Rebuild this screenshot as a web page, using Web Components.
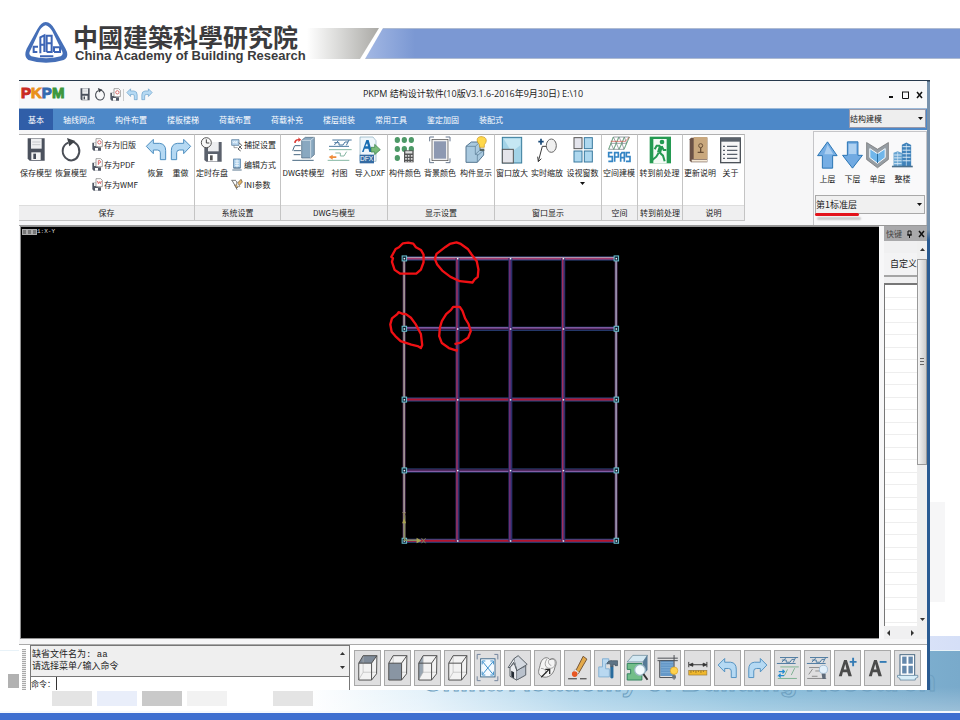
<!DOCTYPE html>
<html lang="zh-CN">
<head>
<meta charset="utf-8">
<title>PKPM 结构设计软件</title>
<style>
html,body{margin:0;padding:0}
body{background:#fff;color:#222;font-family:"Liberation Sans","Noto Sans CJK SC",sans-serif;font-size:8px}
</style>
</head>
<body>
<slide-page>
  <slide-banner></slide-banner>
  <app-window>
    <title-bar></title-bar>
    <tab-strip></tab-strip>
    <ribbon-bar>
      <ribbon-group name="保存" style="--w:176px;--cols:34px 36px 54px 25px 25px">
        <ribbon-tool icon="save">保存模型</ribbon-tool>
        <ribbon-tool icon="refresh">恢复模型</ribbon-tool>
        <tool-stack>
          <ribbon-tool small icon="copyO">存为旧版</ribbon-tool>
          <ribbon-tool small icon="copyP">存为PDF</ribbon-tool>
          <ribbon-tool small icon="copyW">存为WMF</ribbon-tool>
        </tool-stack>
        <ribbon-tool icon="undo">恢复</ribbon-tool>
        <ribbon-tool icon="redo">重做</ribbon-tool>
      </ribbon-group>
      <ribbon-group name="系统设置" style="--w:86px;--cols:34px 50px">
        <ribbon-tool icon="timer">定时存盘</ribbon-tool>
        <tool-stack>
          <ribbon-tool small icon="snap">捕捉设置</ribbon-tool>
          <ribbon-tool small icon="edit">编辑方式</ribbon-tool>
          <ribbon-tool small icon="ini">INI参数</ribbon-tool>
        </tool-stack>
      </ribbon-group>
      <ribbon-group name="DWG与模型" style="--w:107px;--cols:45px 27px 34px">
        <ribbon-tool icon="dwg">DWG转模型</ribbon-tool>
        <ribbon-tool icon="sketch">衬图</ribbon-tool>
        <ribbon-tool icon="dxf">导入DXF</ribbon-tool>
      </ribbon-group>
      <ribbon-group name="显示设置" style="--w:107px;--cols:34px 36px 36px">
        <ribbon-tool icon="dots">构件颜色</ribbon-tool>
        <ribbon-tool icon="backdrop">背景颜色</ribbon-tool>
        <ribbon-tool icon="showpart">构件显示</ribbon-tool>
      </ribbon-group>
      <ribbon-group name="窗口显示" style="--w:107px;--cols:34px 36px 35px">
        <ribbon-tool icon="winzoom">窗口放大</ribbon-tool>
        <ribbon-tool icon="livezoom">实时缩放</ribbon-tool>
        <ribbon-tool icon="panes" drop>设视窗数</ribbon-tool>
      </ribbon-group>
      <ribbon-group name="空间" style="--w:36px;--cols:34px">
        <ribbon-tool icon="spas">空间建模</ribbon-tool>
      </ribbon-group>
      <ribbon-group name="转到前处理" style="--w:45px;--cols:43px">
        <ribbon-tool icon="exit">转到前处理</ribbon-tool>
      </ribbon-group>
      <ribbon-group name="说明" style="--w:62px;--cols:34px 27px">
        <ribbon-tool icon="book">更新说明</ribbon-tool>
        <ribbon-tool icon="about">关于</ribbon-tool>
      </ribbon-group>
      <floor-panel slot="side"></floor-panel>
    </ribbon-bar>
    <work-area>
      <cad-view></cad-view>
      <dock-panel></dock-panel>
    </work-area>
    <status-area>
      <command-box></command-box>
      <view-toolbar></view-toolbar>
    </status-area>
  </app-window>
</slide-page>

<script>
const undoPath='<path d="M10 31L31 10V22H50Q68 24 68 44V71H52V50Q52 42 43 42H31V53Z" fill="#b5d9f3" stroke="#4e8fc0" stroke-width="3" stroke-linejoin="round"/>';
const copyBase=(c)=>`<path d="M4 14H20V28H30V38H8L4 34Z" fill="#525865"/><rect x="9" y="15" width="11" height="9" fill="#eee"/><rect x="12" y="30" width="9" height="8" fill="#fff"/><path d="M15 2H29L34 7V26H15Z" fill="#fff" stroke="#777" stroke-width="2"/>${c}`;
const sketchLines='<g fill="none" stroke="#57708c" stroke-width="3"><path d="M16 12H74M6 31H66M34 14L22 27M66 12L58 28M22 20H36V27H48L54 18H63" stroke="#48769e"/></g>';
const cubeFill='<path d="M12 38L26 14H70L69 72L53 92H12Z" fill="#f3f3f3"/>';
const cubeEdges='<path d="M12 38L26 14H70L69 72L53 92H12ZM12 38H53V92M53 38L70 14" fill="none" stroke="#4a4a4a" stroke-width="3" stroke-linejoin="round"/>';
const cubeBack='<path d="M26 15V67H69M26 67L12 91" fill="none" stroke="#b3b3b3" stroke-width="2"/>';
const corner='<path d="M7 26V10H18M62 10H73V26M7 80V94H18M62 94H73V80" fill="none" stroke="#6d7f99" stroke-width="3"/>';
const aPath='<path d="M12 80L29 28H38L54 80H43L39 67H25L22 80ZM28 58H37L33 41Z" fill="#4b4b4b" fill-rule="evenodd"/>';
const B=[78,84], S=[36,42], T=[80,107];
const ICONS={
save:[B,'<path d="M14 7H65V74H20L14 68Z" fill="#4b515d"/><rect x="24" y="8" width="32" height="30" fill="#eeeff1"/><path d="M28 18H52M28 26H52" stroke="#c7c9cd" stroke-width="3"/><rect x="25" y="49" width="28" height="23" fill="#f4f4f4"/><rect x="31" y="53" width="8" height="16" fill="#454b57"/>'],
refresh:[B,'<path d="M31 20C12 28 9 50 22 65C34 78 53 75 60 60C69 43 62 24 44 17" fill="none" stroke="#4a4e56" stroke-width="6"/><path d="M27 6L52 15L34 31Z" fill="#3e4248"/>'],
copyO:[S,copyBase('<circle cx="25" cy="13" r="5" fill="none" stroke="#c33" stroke-width="2"/>')],
copyP:[S,copyBase('<path d="M22 21V8H27Q31 12 27 15H22" fill="none" stroke="#c33" stroke-width="2"/>')],
copyW:[S,copyBase('<path d="M19 9L22 17L25 11L28 17L31 9" fill="none" stroke="#c33" stroke-width="2"/>')],
undo:[B,undoPath],
redo:[B,`<g transform="translate(78 0) scale(-1 1)">${undoPath}</g>`],
timer:[B,'<path d="M16 18H68V77H22L16 72Z" fill="#5b616c"/><rect x="27" y="18" width="32" height="28" fill="#edeef0"/><rect x="27" y="54" width="28" height="22" fill="#fff"/><rect x="33" y="58" width="8" height="15" fill="#555"/><circle cx="22" cy="20" r="15" fill="#f8f8f8" stroke="#555" stroke-width="3"/><path d="M22 10V21H31" fill="none" stroke="#444" stroke-width="3"/>'],
snap:[S,'<path d="M2 5H24V22H2Z" fill="#b9d6ee" stroke="#496f92" stroke-width="2"/><path d="M5 10L8 15L11 10L14 15M17 9V16" stroke="#fff" stroke-width="2" fill="none"/><path d="M9 22V29H20" stroke="#777" stroke-width="2" fill="none"/><path d="M24 14L32 22L21 33L29 39M24 25L33 33" stroke="#555" stroke-width="3" fill="none"/>'],
edit:[S,'<rect x="8" y="3" width="20" height="27" fill="#a8cde9" stroke="#416e97" stroke-width="2"/><path d="M12 9H24M12 16H24M12 23H24M18 4V30" stroke="#fff" stroke-width="2"/><path d="M4 36H32M8 30H28" stroke="#55738c" stroke-width="3"/>'],
ini:[S,'<path d="M1 7H15M3 7L14 26L18 35" fill="none" stroke="#777" stroke-width="3"/><path d="M30 4L11 24L18 30L34 12Z" fill="#e7b665" stroke="#5b4b39" stroke-width="2"/><path d="M16 9L27 26H18Z" fill="#fff" stroke="#777" stroke-width="2"/>'],
dwg:[B,'<path d="M32 13L43 4H70V56L59 66H32Z" fill="#89a8c0" stroke="#476278" stroke-width="2"/><path d="M32 13H59V66M59 13L70 4" fill="none" stroke="#e5eef4" stroke-width="2"/><path d="M12 29H29M8 44H30M8 56H29M4 73H68M11 29L5 44" stroke="#496983" stroke-width="3"/><path d="M9 20Q10 10 23 9L21 4L31 11L22 18V13Q15 14 14 21Z" fill="#db3b35"/>'],
sketch:[B,sketchLines+'<path d="M6 41H74M2 73H67M25 51H40V60H51L59 47" fill="none" stroke="#86b7a4" stroke-width="3"/><path d="M5 63L17 56V61H28V66H17V71Z" fill="#ef8b39"/>'],
dxf:[B,'<path d="M9 3H48L57 14V76H9Z" fill="#eef6fb" stroke="#86aabc" stroke-width="2"/><path d="M15 48L28 12H35L45 48H37L34 38H23L20 48ZM25 31H33L30 22Z" fill="#176db2" fill-rule="evenodd"/><path d="M42 34H53V25L70 41L53 56V48H42Z" fill="#78ba79" stroke="#327a43" stroke-width="2"/><rect x="8" y="56" width="43" height="26" fill="#346ba3"/><text x="29" y="76" text-anchor="middle" font-family="Liberation Sans" font-size="20" fill="#fff">DFX</text>'],
dots:[B,'<g fill="#4d9967"><ellipse cx="16" cy="12" rx="8" ry="9"/><ellipse cx="37" cy="12" rx="8" ry="9"/><ellipse cx="58" cy="12" rx="8" ry="9"/><ellipse cx="16" cy="39" rx="8" ry="9"/><ellipse cx="37" cy="39" rx="8" ry="9"/><ellipse cx="58" cy="39" rx="8" ry="9"/><ellipse cx="16" cy="66" rx="8" ry="9"/></g><rect x="36" y="43" width="29" height="36" fill="#555"/><path d="M40 49H61" stroke="#ddd" stroke-width="7"/><path d="M42 57V77M50 57V77M59 57V77" stroke="#ddd" stroke-width="5" stroke-dasharray="5 4"/>'],
backdrop:[B,'<path d="M8 16V3H21M56 3H69V16M8 67V80H21M56 80H69V67" fill="none" stroke="#69798f" stroke-width="3"/><rect x="15" y="10" width="48" height="64" fill="#eee" stroke="#464646" stroke-width="2"/><rect x="21" y="16" width="36" height="52" fill="#8d99b2"/>'],
showpart:[B,'<path d="M9 31L25 18H51V42H62V57L43 79H9Z" fill="#a9c9df" stroke="#567791" stroke-width="3"/><path d="M9 31H37L51 18M37 31V55L51 42M37 55H43V79M43 59L62 43" fill="none" stroke="#567791" stroke-width="2"/><path d="M49 26C35 9 46 0 58 2C72 4 73 17 64 26V34H50Z" fill="#ffd84b" stroke="#c69422" stroke-width="2"/><path d="M51 38H64V45H51Z" fill="#566"/>'],
winzoom:[B,'<rect x="10" y="4" width="58" height="77" fill="#a3d3e7" stroke="#377b9a" stroke-width="3"/><path d="M14 8H64V28L38 48" fill="#c5e7f3"/><rect x="10" y="40" width="33" height="41" fill="#e4e5eb" stroke="#555" stroke-width="3"/>'],
livezoom:[B,'<path d="M13 17H29M21 8V26" stroke="#174877" stroke-width="5"/><ellipse cx="52" cy="29" rx="15" ry="20" fill="#f0f0f0" stroke="#666" stroke-width="3"/><path d="M36 31H25L13 76M11 62L13 77L22 68" fill="none" stroke="#3b3b3b" stroke-width="3"/>'],
panes:[B,'<g fill="#aed8ef" stroke="#39799e" stroke-width="3"><rect x="12" y="5" width="24" height="33" fill="#e3e4ec" stroke="#555"/><rect x="43" y="5" width="24" height="33"/><rect x="12" y="45" width="24" height="33"/><rect x="43" y="45" width="24" height="33"/></g>'],
spas:[B,'<g fill="none" stroke="#69747b" stroke-width="2"><path d="M22 3H70L54 40H8ZM15 22H62M22 3L31 22L39 3L48 22L55 3L62 22M15 22L23 40L31 22L39 40L48 22L54 40"/><path d="M22 3L8 40M38 3L23 40M55 3L39 40M70 3L54 40" stroke="#5aaf74"/><path d="M14 16H58M58 16L70 3" stroke="#d84d43"/></g><path d="M19 50H8V62H19V76H7M26 77V50H37V63H26M44 77V55L48 50H55V77M44 65H55M72 50H61V62H72V76H60" fill="none" stroke="#3485c4" stroke-width="5"/>'],
exit:[B,'<rect x="8" y="2" width="64" height="80" fill="#249a52"/><path d="M19 9H59V82H19Z" fill="#f4fbf6"/><circle cx="45" cy="18" r="7" fill="#249a52"/><path d="M42 30L36 50" stroke="#249a52" stroke-width="12"/><path d="M40 29H29L23 40M44 31L50 42H58M37 49L48 59L53 76M35 50L28 62L16 72" fill="none" stroke="#249a52" stroke-width="6"/>'],
book:[B,'<path d="M12 5H61V79H12L8 73V10Z" fill="#6a5146"/><path d="M20 3H61V69H20Z" fill="#c9a87e"/><path d="M14 71H60V77H14Z" fill="#f6ead8"/><circle cx="41" cy="29" r="6" fill="none" stroke="#684e36" stroke-width="3"/><path d="M41 35V47M32 49H50" stroke="#684e36" stroke-width="4"/>'],
about:[B,'<rect x="8" y="6" width="59" height="74" fill="#f7f7f7" stroke="#4c5259" stroke-width="4"/><rect x="8" y="5" width="59" height="12" fill="#59616a"/><path d="M15 31H21M15 43H21M15 55H21M15 67H21M27 31H58M27 43H58M27 55H58M27 67H58" stroke="#58606a" stroke-width="4"/>'],
up:[B,'<path d="M39 1L69 44H55V83H23V44H8Z" fill="#76aee4" stroke="#2672b2" stroke-width="3"/><path d="M39 10L57 40H29Z" fill="#c0dcf6" opacity=".7"/>'],
down:[B,'<path d="M23 1H56V43H70L39 83L8 43H23Z" fill="#71aae2" stroke="#2672b2" stroke-width="3"/><path d="M27 7H51V39H27Z" fill="#c9e1f8" opacity=".7"/>'],
single:[B,'<path d="M5 3L39 24L73 3V56L39 82L5 56Z" fill="#969da3" stroke="#666" stroke-width="2"/><path d="M15 22L39 38L63 22V50L39 68L15 50Z" fill="#70b6ea" stroke="#fff" stroke-width="3"/><path d="M39 38V67" stroke="#256a9c" stroke-width="3"/>'],
building:[B,'<path d="M37 10L51 3L66 11V76H37Z" fill="#3f82ba"/><path d="M11 35L24 30L38 36V76H11Z" fill="#69a5d2"/><path d="M39 16H64M39 27H64M39 38H64M39 49H64M39 60H64M13 42H36M13 51H36M13 60H36M13 69H36" stroke="#dcecf8" stroke-width="3"/><path d="M51 8V76M24 33V76" stroke="#dcecf8" stroke-width="2"/><path d="M6 78H71" stroke="#4b6f8b" stroke-width="5"/>'],
cubeTop:[T,cubeFill+'<path d="M12 38L26 14H70L53 38Z" fill="#7f8b99"/>'+cubeBack+cubeEdges],
cubeFront:[T,cubeFill+cubeBack+'<path d="M12 38H53V92H12Z" fill="#8995a3"/>'+cubeEdges],
cubeLeft:[T,cubeFill+'<path d="M12 38L26 14V67L12 92Z" fill="#98a5b1"/>'+cubeBack+cubeEdges],
cubeWire:[T,cubeFill+cubeBack+cubeEdges],
extents:[T,corner+'<rect x="18" y="24" width="46" height="58" fill="#f4faff" stroke="#3c6788" stroke-width="3"/><path d="M25 34L57 73M57 34L25 73M23 42V31H33M49 31H59V42M23 65V76H33M49 76H59V65" fill="none" stroke="#358cca" stroke-width="3"/>'],
house:[T,'<path d="M16 50V80L37 92L66 76V48L44 26Z" fill="#eceef2" stroke="#4e555d" stroke-width="3" stroke-linejoin="round"/><path d="M37 60V92L66 76V48Z" fill="#b9c1cc" stroke="#4e555d" stroke-width="2"/><path d="M28 24L42 14L71 42L38 62Z" fill="#d4d9e0" stroke="#4e555d" stroke-width="3" stroke-linejoin="round"/><path d="M28 24L10 52L16 52L28 35L38 62" fill="#eceef2" stroke="#4e555d" stroke-width="3" stroke-linejoin="round"/><path d="M20 62L29 67V86L20 81Z" fill="#252c35"/>'],
orbit:[T,'<path d="M17 41C22 20 39 15 48 27C65 16 73 35 64 50C59 82 31 91 15 76C7 66 15 55 17 41Z" fill="#f4f4f4" stroke="#777" stroke-width="3"/><path d="M38 25C25 44 37 60 57 53C72 39 62 20 49 25C39 29 43 44 52 45M19 55C28 54 36 60 35 72" fill="none" stroke="#777" stroke-width="2"/><path d="M20 83L45 58M33 58H47V73" fill="none" stroke="#222" stroke-width="4"/>'],
brush:[T,'<path d="M34 63L58 16L70 25L43 71Z" fill="#e3a94a" stroke="#705134" stroke-width="3"/><path d="M33 57L45 68L36 77L25 68Z" fill="#eee" stroke="#655"/><circle cx="31" cy="73" r="9" fill="#e75723"/><path d="M10 88H38M48 88H69" stroke="#222" stroke-width="3"/>'],
hammer:[T,'<path d="M12 50H24V24H44V40H34V56H46V82H12Z" fill="#b9d8f0" stroke="#82afd2" stroke-width="3"/><path d="M38 40Q42 28 56 30H72V46H64V42H58V50H50V42Q44 38 38 40Z" fill="#5d7386" stroke="#3c4c5a" stroke-width="2"/><path d="M49 50H59V84Q54 90 49 84Z" fill="#286b9d"/>'],
inspect:[T,'<path d="M7 34L25 13H72L57 34Z" fill="#d4e8f2" stroke="#537789" stroke-width="2"/><path d="M7 39H54V92H7V72H18V58H7Z" fill="#72be89" stroke="#2e805c" stroke-width="3"/><path d="M57 34L72 12V60L57 77Z" fill="#567b98"/><circle cx="48" cy="60" r="17" fill="#f2fbff" stroke="#9ab7c4" stroke-width="4"/><path d="M59 73L72 91" stroke="#333" stroke-width="6"/>'],
region:[T,'<rect x="17" y="28" width="43" height="51" fill="#6498c8"/><path d="M20 36H58M20 44H58M20 52H58M20 60H58M20 68H58" stroke="#8ab6dc" stroke-width="2"/><path d="M8 22H73M15 30V84H65M61 12V91M8 30H73" fill="none" stroke="#44494e" stroke-width="3"/><circle cx="61" cy="62" r="12" fill="#ffd24b" stroke="#d69c21" stroke-width="2"/><path d="M55 77H67V87H55Z" fill="#69747d"/>'],
ruler:[T,'<path d="M12 34V51M70 34V51M14 43H69M14 43L25 38V48ZM69 43L58 38V48Z" fill="#333" stroke="#333" stroke-width="3"/><rect x="12" y="61" width="58" height="15" fill="#efb72c" stroke="#967638" stroke-width="2"/><path d="M19 62V69M27 62V66M35 62V69M43 62V66M51 62V69M59 62V66" stroke="#684e22" stroke-width="2"/>'],
tUndo:[T,`<g transform="translate(0 13)">${undoPath}</g>`],
tRedo:[T,`<g transform="translate(80 13) scale(-1 1)">${undoPath}</g>`],
layers1:[T,'<g transform="translate(0 8)">'+sketchLines+'</g><path d="M17 50H76M9 87H70M40 58L30 78M63 54L52 76" fill="none" stroke="#7cb18f" stroke-width="3"/><path d="M12 65H29M24 59L30 65L24 71M29 78H12L18 72M12 78L18 84" fill="none" stroke="#258bd0" stroke-width="4"/>'],
layers2:[T,'<g transform="translate(0 8)">'+sketchLines+'</g><path d="M13 52H70M7 87H68M24 57L12 74M33 63H48M22 80H40" fill="none" stroke="#888" stroke-width="3"/><circle cx="59" cy="58" r="13" fill="#e2f0fb" stroke="#83a9c9" stroke-width="2"/><path d="M53 72H66V89H56Z" fill="#5d6978"/>'],
fontUp:[T,aPath+'<path d="M47 34H69M58 21V48" stroke="#347bb4" stroke-width="6"/>'],
fontDown:[T,aPath+'<path d="M47 34H69" stroke="#347bb4" stroke-width="6"/>'],
window:[T,'<rect x="16" y="11" width="47" height="68" fill="#fff" stroke="#3a5d7a" stroke-width="3"/><rect x="23" y="17" width="34" height="54" fill="#6488ac"/><path d="M40 16V74M22 43H58" stroke="#fff" stroke-width="6"/><path d="M8 77H73V83L65 87V92H16V87L8 83Z" fill="#d9eef8" stroke="#466f8c" stroke-width="2"/>']
};
function icon(n,w,h){const [vb,p]=ICONS[n];return `<svg aria-hidden="true" width="${w}" height="${h}" viewBox="0 0 ${vb[0]} ${vb[1]}">${p}</svg>`}
const BASE='<style>:host,*{box-sizing:border-box}button,input,select,textarea{font:inherit;color:inherit;margin:0;border:0;padding:0;border-radius:0;background:none;outline:0}svg{display:block;flex:none}</style>';
function define(tag,html){customElements.define(tag,class extends HTMLElement{connectedCallback(){if(!this.shadowRoot)this.attachShadow({mode:'open'}).innerHTML=BASE+(typeof html==='function'?html(this):html)}})}

define('slide-page',`<style>
:host{display:grid;min-height:100vh}
.back,.front{grid-area:1/1;min-width:0;display:flex;flex-direction:column}
.back{justify-content:flex-end}
.scene{height:206px;display:flex;justify-content:flex-end;padding-right:15px}
.scene i{display:block;width:15px;height:100px;background:#f6f6f7;margin-top:72px}
.lav{height:14px;background:linear-gradient(90deg,#fff 60%,#d5dff7)}
.sky{height:61px;border-top:1px solid #e8f2f8;background:linear-gradient(#fff0 60%,#ffffff40),linear-gradient(90deg,#fff 32%,#e3f1fa 44%,#acd3ea 60%,#8bbfdc 78%,#79aacb 100%);display:flex;align-items:flex-end;justify-content:flex-end;padding:0 24px 12px 0;font:bold 29px/36px "Liberation Sans",sans-serif;color:transparent;-webkit-text-stroke:1px #6d9fc0;overflow:hidden;white-space:nowrap}
.bar{height:9px;border-top:2px solid #f6f9fd;background:#3f6fd0}
.front{z-index:1}
.chips{height:30px;display:flex;align-items:flex-start;padding:1px 0 0 52px;gap:5px}
.chips i{width:40px;height:15px}
.main{flex:1;display:flex;align-items:stretch}
.side{width:19px;display:flex;align-items:flex-end;justify-content:flex-end;padding-bottom:2px}
.side i{width:11px;height:14px;background:#b1b1b1}
::slotted(app-window){flex:1;min-width:0}
.gap{width:30px}
</style>
<div class="back"><div class="scene"><i></i></div><div class="lav"></div><div class="sky" aria-hidden="true">China Academy of Building Research</div><div class="bar"></div></div>
<div class="front"><slot name="banner"></slot><div class="main"><div class="side"><i></i></div><slot></slot><div class="gap"></div></div>
<div class="chips"><i style="background:#e4e4e4"></i><i style="background:#e9eefa"></i><i style="background:#c9c9c9"></i><i style="background:#f2f2f2"></i><i style="width:36px"></i><i style="background:#e4e4e4"></i></div></div>`);
document.querySelector('slide-banner').slot='banner';

define('slide-banner',`<style>
:host{display:flex;height:80px;align-items:flex-start;padding-left:25px}
.logo{margin-top:21px}
.names{margin:24px 0 0 5px;width:230px;white-space:nowrap;color:#3b3b3d}
.zh{font:bold 25px/25px "Noto Sans CJK TC",sans-serif}
.en{font:bold 13px/14px "Liberation Sans",sans-serif;padding-left:2px}
.grey{width:72px;height:31px;margin:28px -14px 0 4px;background:linear-gradient(90deg,#fff,#d5d5d3 50%,#aaa9a5);clip-path:polygon(0 0,100% 0,53px 100%,0 100%)}
.blue{flex:1;height:31px;margin-top:28px;background:linear-gradient(90deg,#a3b8e4,#7b98d3 50px);border-top:1px solid #aebbd2;border-bottom:1px solid #aebbd2;clip-path:polygon(18px 0,100% 0,100% 100%,0 100%)}
</style>
<svg class="logo" width="43" height="43" viewBox="0 0 129 129" role="img" aria-label="CABR"><path d="M62 3Q78 4 89 25L121 82Q135 107 116 117Q63 134 10 117Q-5 107 5 83L37 25Q48 4 62 3ZM62 13Q51 16 43 30L17 86Q8 100 19 106Q64 118 107 106Q118 100 109 86L82 31Q73 16 62 13Z" fill="#456fb8" fill-rule="evenodd"/><g fill="none" stroke="#3d65b5" stroke-width="6"><path d="M39 77H26V93H37M46 97V49L58 43V93M46 71H58M65 93V44H80V67H65M80 67V93H65M87 93V79H105V93H87M45 106H85"/></g></svg>
<div class="names"><div class="zh">中國建築科學研究院</div><div class="en">China Academy of Building Research</div></div>
<div class="grey"></div><div class="blue"></div>`);

define('app-window',`<style>:host{display:flex;flex-direction:column;background:#f7f7f8;border-top:1px solid #24384e;border-right:3px solid #2d5d93;border-image:linear-gradient(#27394d 0 1px,#7892ac 2px 150px,#2a5b92 160px) 1 3 0 0}</style><slot></slot>`);

define('title-bar',`<style>
:host{display:grid;grid-template-columns:1fr auto 1fr;height:27px;align-items:center;background:#f8f8f9}
.l,.r{display:flex;align-items:center}
.logo{font:bold 15px/18px "Liberation Sans",sans-serif;width:43px;margin:0 13px 4px 2px;-webkit-text-stroke:1px}
.l button{width:15px;height:16px;display:flex;align-items:center;justify-content:center}
.sep{width:1px;height:12px;background:#ccc;margin:0 0 0 1px}
h1{margin:0 0 2px;font:9px/14px "Open Sans","Noto Sans CJK SC",sans-serif;color:#222;white-space:nowrap}
.r{justify-content:flex-end;padding-right:1px}
.r button{width:14px;height:14px;display:flex;align-items:center;justify-content:center}
</style>
<div class="l"><div class="logo"><span style="color:#c92a22">P</span><span style="color:#e9901b">K</span><span style="color:#3469ae">P</span><span style="color:#3d973d">M</span></div>
<button aria-label="保存">${icon('save',14,15)}</button><button aria-label="刷新">${icon('refresh',14,15)}</button><button aria-label="另存">${icon('copyO',12,14)}</button><i class="sep"></i><button aria-label="撤销">${icon('undo',14,15)}</button><button aria-label="重做">${icon('redo',14,15)}</button></div>
<h1>PKPM 结构设计软件(10版V3.1.6-2016年9月30日) E:\\10</h1>
<div class="r"><button aria-label="最小化"><svg width="6" height="8"><path d="M1 6H5" stroke="#111" stroke-width="2"/></svg></button><button aria-label="最大化"><svg width="7" height="8"><path d="M.5 1V7.5H6.5V1M0 1H7" fill="none" stroke="#111"/></svg></button><button aria-label="关闭"><svg width="7" height="8"><path d="M1 1L6 7M6 1L1 7" stroke="#111" stroke-width="1.5"/></svg></button></div>`);

define('tab-strip',`<style>
:host{display:flex;height:22px;background:#4d88c8;border-top:1px solid #9cb9d8;color:#fff;font-family:"Noto Sans CJK SC",sans-serif}
nav{display:flex;flex:1}
button{padding:0 10px 0;line-height:20px;white-space:nowrap}
button.on{background:#305ea8;padding:0 9px}
label{display:flex;position:relative;width:77px;margin-right:1px;background:#eee;color:#222;border:1px solid #99a;height:19px}
select{appearance:none;width:100%;font-size:8px;line-height:17px}
svg{position:absolute;right:2px;top:7px;pointer-events:none}
</style>
<nav>${['基本','轴线网点','构件布置','楼板楼梯','荷载布置','荷载补充','楼层组装','常用工具','鉴定加固','装配式'].map((t,i)=>`<button class="${i?'':'on'}">${t}</button>`).join('')}</nav>
<label><select aria-label="模块"><option>结构建模</option></select><svg width="5" height="4"><path d="M0 0H5L2.5 3Z" fill="#111"/></svg></label>`);

define('ribbon-bar',`<style>:host{display:flex;height:96px;padding-top:1px;border-bottom:1px solid #999;background:#f6f6f7}
.groups{display:flex;flex:1;min-width:0;height:87px;margin-top:3px;align-items:stretch}</style><div class="groups"><slot></slot></div><slot name="side"></slot>`);

define('ribbon-group',e=>`<style>:host{display:grid;grid-template-rows:1fr 15px;width:var(--w);flex:none;background:#fff;border:1px solid #c4c4c4;border-top-color:#b0b0b0;border-left:0;font-family:"Noto Sans CJK SC",sans-serif}
.in{display:grid;grid-template-columns:var(--cols);align-items:start;min-width:0}
.name{background:#efeff0;border-top:1px solid #ddd;text-align:center;line-height:13px;white-space:nowrap}</style><div class="in"><slot></slot></div><div class="name">${e.getAttribute('name')}</div>`);

define('tool-stack',`<style>:host{display:flex;flex-direction:column;padding-left:2px}</style><slot></slot>`);

define('ribbon-tool',e=>{const s=e.hasAttribute('small');return `<style>:host{display:block;min-width:0}
button{display:flex;align-items:center;width:100%;white-space:nowrap;line-height:14px;${s?'height:20px;gap:1px':'flex-direction:column;padding-top:1px;gap:2px'}}</style>
<button>${s?icon(e.getAttribute('icon'),12,14):icon(e.getAttribute('icon'),26,28)}<span><slot></slot></span>${e.hasAttribute('drop')?'<svg width="5" height="4"><path d="M0 0H5L2.5 3Z" fill="#111"/></svg>':''}</button>`});

define('floor-panel',`<style>
:host{display:flex;flex-direction:column;width:114px;border:1px solid #c5c5c8;border-bottom:0;padding:8px 1px 0;background:#f9f9fa;font-family:"Noto Sans CJK SC",sans-serif}
.row{display:flex}
.row button{width:25px;display:flex;flex-direction:column;align-items:center;gap:2px;line-height:14px;height:55px}
label{position:relative;display:flex;height:19px;background:#f0f0f0;border:1px solid #a9a9a9}
select{appearance:none;width:100%;font-size:9px;line-height:16px}
label svg{position:absolute;right:2px;top:7px;pointer-events:none}
.mark{position:absolute;left:-1px;top:17px;width:44px;height:3px;background:#e3121a;border-radius:2px;box-shadow:2px 4px 2px #0003}
</style>
<div class="row">${[['up','上层'],['down','下层'],['single','单层'],['building','整楼']].map(([i,t])=>`<button>${icon(i,25,30)}<span>${t}</span></button>`).join('')}</div>
<label><select aria-label="标准层"><option>第1标准层</option></select><svg width="5" height="4"><path d="M0 0H5L2.5 3Z" fill="#111"/></svg><i class="mark"></i></label>`);

define('work-area',`<style>:host{display:flex;flex:1;min-height:0;padding-left:1px}</style><slot></slot>`);

define('cad-view',()=>{
const X=[403.5,457,510,563,616],Y=[257.5,328,399,470,540.5];let s='';
Y.forEach((y,j)=>{const m=['#a53a6c','#7f3f86','#b3142f','#693a82','#b3142f'][j];s+=`<path d="M403 ${y}H616" stroke="#314a8c" stroke-width="4"/><path d="M403 ${y}H616" stroke="${m}" stroke-width="2"/>`+(j==0?`<path d="M403 ${y-1}H616" stroke="#b49ab0"/>`:j==1?`<path d="M403 ${y-1}H616" stroke="#8c62a8"/><path d="M403 ${y+.5}H616" stroke="#180c2c"/>`:j==3?`<path d="M403 ${y+1}H616" stroke="#8c62a8"/><path d="M403 ${y-.5}H616" stroke="#301030"/>`:'')});
X.slice(1,4).forEach((x,i)=>s+=`<path d="M${x} 257V541" stroke="#2d2f6c" stroke-width="4"/><path d="M${x-.5} 257V541" stroke="${i==1?'#763079':'#a03060'}" stroke-width="1.5"/>`);
s+='<path d="M403.5 257V541M616 257V541" stroke="#55305e" stroke-width="3"/><path d="M403.5 257V541" stroke="#aaa29b" stroke-width="1.5"/><path d="M616 257V541" stroke="#a3a0b8" stroke-width="1.5"/>';
Y.forEach(y=>{[X[0],X[4]].forEach(x=>s+=`<rect x="${x-2}" y="${y-2.5}" width="4.5" height="5" fill="#123" stroke="#6bc3d2"/>`);X.forEach(x=>s+=`<rect x="${x-.5}" y="${y-.5}" width="1.5" height="1.5" fill="#e5f3ff"/>`)});
s+='<path d="M404 515V540H418" fill="none" stroke="#88915e" stroke-width="1.5"/><path d="M401.5 523L403.5 518L405.5 523ZM416 537.5L421 540.5L416 543Z" fill="#aaa452"/><path d="M402 512L403.5 514L405 512M403.5 514V517M421 538L425 543M425 538L421 543" stroke="#8b8150" fill="none"/>';
s+='<g transform="translate(380 235) scale(.3333)" fill="none" stroke="#f01014" stroke-width="7" stroke-linejoin="round"><path d="M45 39L55 34L67 22L83 20L98 23L106 34L121 42L129 56V79L121 101L107 113H58L42 102L34 78L37 67L32 63L45 39Z"/><path d="M228 19L208 24L195 33L168 54L163 69L170 86L185 104L210 123L238 136L276 140L282 131L292 123L294 101L289 76L273 55L263 40L241 24Z"/><path d="M65 234L54 229L50 235L34 248L29 266L33 288L44 301L60 316L92 327L111 331L121 337L125 328L121 295L105 265L91 246L76 235Z"/><path d="M222 325L240 321L263 306L271 286L264 264L254 248L246 225L238 213L218 213L211 223L197 235L184 256L178 276L176 301L184 322L205 337L229 345V340"/></g>';
return `<style>:host{display:block;flex:1;min-width:0;position:relative;background:#000;border:1px solid #929292;border-right:0}svg.c{position:absolute;inset:0;width:100%;height:100%}.v{position:absolute;left:1px;top:1px;display:flex;align-items:center;color:#ddd;font:6px/8px "Liberation Mono",monospace}.v b{width:5px;height:6px;border:1px solid #aaa;background:#777}</style>
<svg class="c" viewBox="21 226 857 412" role="img" aria-label="轴网平面">${s}</svg><div class="v"><b></b><b></b><b></b><span>1:X-Y</span></div>`});

define('dock-panel',`<style>
:host{display:flex;flex-direction:column;width:43px;margin-left:5px;background:#f0f0f1;font-family:"Noto Sans CJK SC",sans-serif}
header{height:15px;background:#a9a9ab;color:#444;display:flex;align-items:center;padding-left:2px}
header span{flex:1;line-height:14px}header button{width:12px;height:14px;display:grid;place-items:center}
.b{flex:1;display:grid;grid-template-columns:1fr 10px}
.l{display:flex;flex-direction:column;min-width:0;padding-top:12px}
.tab{height:24px;background:#f3f3f4;border-bottom:2px solid #a5a5a5;text-align:right;font-size:9px;line-height:22px;white-space:nowrap}
.list{flex:1;margin-top:6px;border-top:2px solid #777;border-left:1px solid #777;background:repeating-linear-gradient(#fff 0 12px,#eee 12px 13px,#fff 13px 24px,#eee 24px 25px)}
.h{height:13px;display:flex;justify-content:space-between;align-items:center;padding:0 3px}
.s{display:flex;flex-direction:column;align-items:center;padding:7px 0 17px;background:#efefef}
.s i{width:10px;margin-top:7px;height:206px;border:1px solid #999;background:repeating-linear-gradient(#666 0 1px,#ddd 1px 3px) 50% 50%/4px 8px no-repeat,linear-gradient(90deg,#f5f5f5,#ccc)}
.s b{flex:1}
</style>
<header><span>快键</span><button aria-label="固定"><svg width="7" height="8"><path d="M2 1H5V5H2ZM1 5H6M3.5 5V8" fill="none" stroke="#111"/></svg></button><button aria-label="关闭"><svg width="7" height="8"><path d="M1 1L6 7M6 1L1 7" stroke="#111" stroke-width="1.5"/></svg></button></header>
<div class="b"><div class="l"><button class="tab">自定义</button><div class="list"></div><div class="h"><svg width="4" height="6"><path d="M3 0V6L0 3Z" fill="#333"/></svg><svg width="4" height="6"><path d="M1 0V6L4 3Z" fill="#333"/></svg></div></div>
<div class="s"><svg width="5" height="4"><path d="M0 3H5L2.5 0Z" fill="#333"/></svg><i></i><b></b><svg width="5" height="4"><path d="M0 0H5L2.5 3Z" fill="#333"/></svg></div></div>`);

define('status-area',`<style>:host{display:flex;height:51px;padding:6px 3px 0 3px;background:linear-gradient(#f6f6f7 5px,#aaa 5px 6px,#fff 6px);gap:4px}</style><slot></slot>`);

define('command-box',`<style>
:host{display:flex;flex:0 1 328px;gap:4px;min-width:0;font-family:"Noto Sans CJK SC",sans-serif;font-size:8px}
.grip{width:4px;margin-top:4px;background:repeating-linear-gradient(#aaa 0 1px,#eee 1px 2px)}
.x{flex:1;display:flex;flex-direction:column;min-width:0;border:1px solid #777;border-bottom:0}
.log{height:31px;display:flex;background:#efefef;border-bottom:1px solid #777}
textarea{flex:1;resize:none;overflow:hidden;font:9px/12px "Liberation Mono","Noto Sans CJK SC",monospace;padding:3px 1px}
.sc{width:13px;display:flex;flex-direction:column;justify-content:space-between;align-items:center;padding:6px 0}
.c{flex:1;display:flex;align-items:stretch;line-height:14px;background:#fff;overflow:hidden}
label{width:25px;white-space:nowrap}input{flex:1;min-width:0;border-left:1px solid #333}
</style><div class="grip"></div><div class="x"><div class="log"><textarea readonly aria-label="命令记录">缺省文件名为: aa
请选择菜单/输入命令</textarea><div class="sc"><svg width="5" height="4"><path d="M0 3H5L2.5 0Z" fill="#333"/></svg><svg width="5" height="4"><path d="M0 0H5L2.5 3Z" fill="#333"/></svg></div></div><div class="c"><label for="cmd">命令：</label><input id="cmd"></div></div>`);

define('view-toolbar',`<style>:host{display:flex;flex:1;gap:3px;align-items:flex-start;padding-top:5px}button{width:27px;height:36px;background:#dfdfe0;border:1px solid #a8a8a8;display:grid;place-items:center}</style>
${[['cubeTop','俯视图'],['cubeFront','正视图'],['cubeLeft','左视图'],['cubeWire','线框'],['extents','全图'],['house','轴测'],['orbit','旋转'],['brush','清理'],['hammer','修改'],['inspect','查看'],['region','局部'],['ruler','测量'],['tUndo','撤销'],['tRedo','重做'],['layers1','图层切换'],['layers2','图层显示'],['fontUp','字体放大'],['fontDown','字体缩小'],['window','窗口']].map(([i,t])=>`<button aria-label="${t}">${icon(i,25,34)}</button>`).join('')}`);
</script>
</body>
</html>
